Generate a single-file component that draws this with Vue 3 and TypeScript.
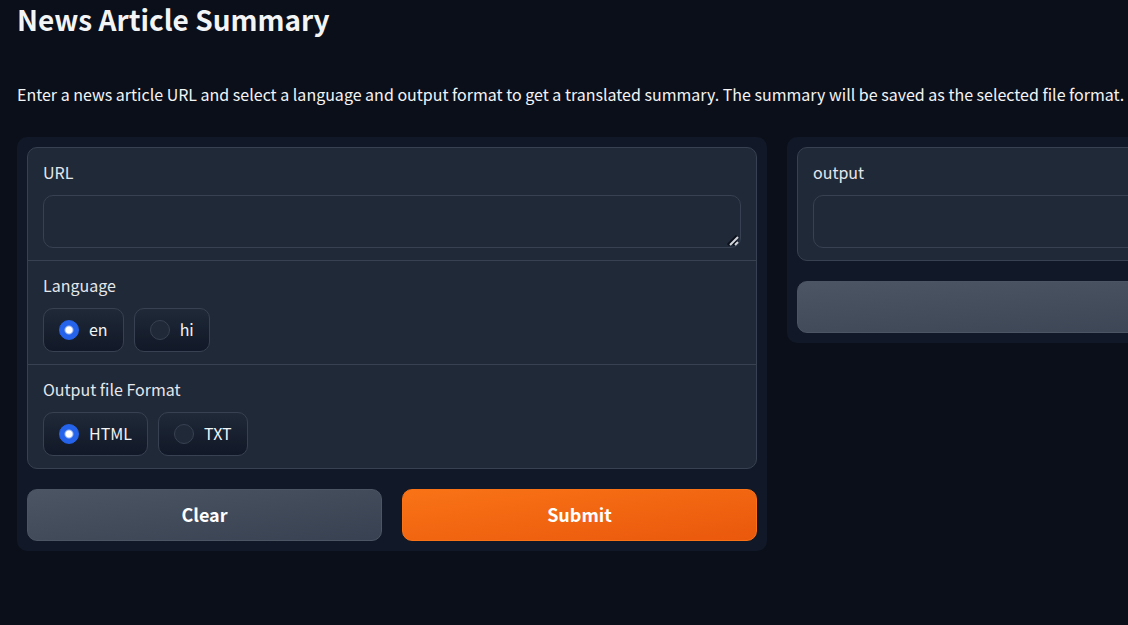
<script setup lang="ts">
import { ref } from 'vue'

const url = ref('')
const output = ref('')
const language = ref('en')
const format = ref('HTML')

const languages: string[] = ['en', 'hi']
const formats: string[] = ['HTML', 'TXT']

function clearForm(): void {
  url.value = ''
  output.value = ''
  language.value = 'en'
  format.value = 'HTML'
}
</script>

<template>
  <main class="page">
    <h1>News Article Summary</h1>
    <p class="description">
      Enter a news article URL and select a language and output format to get a translated summary. The summary will be saved as the selected file format.
    </p>
    <div class="columns">
      <form class="panel" @submit.prevent>
        <div class="block">
          <div class="field">
            <label class="caption" for="url">URL</label>
            <textarea id="url" v-model="url" class="box resizable" rows="1"></textarea>
          </div>
          <fieldset class="field">
            <legend class="caption">Language</legend>
            <div class="options">
              <label v-for="item in languages" :key="item" class="option">
                <input v-model="language" type="radio" name="language" :value="item" />
                <span>{{ item }}</span>
              </label>
            </div>
          </fieldset>
          <fieldset class="field">
            <legend class="caption">Output file Format</legend>
            <div class="options">
              <label v-for="item in formats" :key="item" class="option">
                <input v-model="format" type="radio" name="format" :value="item" />
                <span>{{ item }}</span>
              </label>
            </div>
          </fieldset>
        </div>
        <div class="actions">
          <button type="button" class="button secondary" @click="clearForm">Clear</button>
          <button type="submit" class="button primary">Submit</button>
        </div>
      </form>
      <section class="panel">
        <div class="block">
          <div class="field">
            <label class="caption" for="output">output</label>
            <textarea id="output" v-model="output" class="box" rows="1" readonly></textarea>
          </div>
        </div>
        <div class="actions">
          <button type="button" class="button secondary" aria-label="Flag"></button>
        </div>
      </section>
    </div>
  </main>
</template>

<style>
body {
  background: #0b0f19;
  overflow: hidden;
}
</style>

<style scoped>
.page {
  padding-left: 17px;
  overflow: hidden;
  color: #f3f4f6;
  font-family: "Source Sans Pro", "Noto Sans CJK SC", "Noto Sans", sans-serif;
  font-size: 16px;
  line-height: 24px;
}

h1 {
  margin: 0;
  font-size: 28px;
  line-height: 38px;
  font-weight: 600;
}

.description {
  margin: 44px 0 31px;
}

.columns {
  display: grid;
  grid-template-columns: repeat(2, minmax(750px, 1fr));
  align-items: start;
  gap: 20px;
}

.panel {
  display: flex;
  flex-direction: column;
  gap: 20px;
  padding: 10px;
  border-radius: 10px;
  background: #111827;
}

.block {
  border: 1px solid #374151;
  border-radius: 10px;
  background: #1f2937;
}

.field {
  margin: 0;
  min-width: 0;
  padding: 12px 15px;
  border: 0;
}

.field + .field {
  border-top: 1px solid #374151;
}

.caption {
  display: block;
  float: left;
  width: 100%;
  margin: 0 0 11px;
  padding: 0;
  color: #e5e7eb;
}

.box {
  display: block;
  box-sizing: border-box;
  width: 100%;
  height: 53px;
  margin: 0;
  padding: 12px;
  border: 1px solid #374151;
  border-radius: 10px;
  outline: none;
  overflow: hidden;
  resize: none;
  background: #1f2937;
  color: #f3f4f6;
  font: inherit;
}

.resizable {
  resize: vertical;
}

.resizable::-webkit-resizer {
  background: url("data:image/svg+xml,%3Csvg xmlns='http://www.w3.org/2000/svg' viewBox='0 0 15 15'%3E%3Cpath d='M3 13L12 4M8 13L12 9' stroke='%230b0f19' stroke-width='3'/%3E%3Cpath d='M5 13L13 5M10 13L13 10' stroke='%23d1d5db' stroke-width='2'/%3E%3C/svg%3E") center / 15px 15px no-repeat;
}

.options {
  clear: both;
  display: flex;
  flex-wrap: wrap;
  gap: 10px;
}

.option {
  display: flex;
  align-items: center;
  gap: 10px;
  box-sizing: border-box;
  height: 44px;
  padding: 0 15px;
  border: 1px solid #374151;
  border-radius: 10px;
  background: linear-gradient(to bottom, #1f2937, #111827);
}

.option span {
  padding-bottom: 2px;
}

.option input {
  appearance: none;
  box-sizing: border-box;
  width: 20px;
  height: 20px;
  margin: 0;
  border: 1px solid #374151;
  border-radius: 50%;
  background: #1f2937;
}

.option input:checked {
  border-color: #2563eb;
  background: radial-gradient(circle, #fff 0 3px, #2563eb 5px);
}

.actions {
  display: flex;
  gap: 20px;
}

.button {
  flex: 1;
  height: 52px;
  padding: 0 0 2px;
  border: 1px solid #4b5563;
  border-radius: 10px;
  color: #fff;
  font: inherit;
  font-size: 18px;
  font-weight: 600;
}

.secondary {
  background: linear-gradient(to bottom right, #4b5563, #374151);
}

.primary {
  border-color: #f97316;
  background: linear-gradient(to bottom right, #f97316, #ea580c);
}
</style>
